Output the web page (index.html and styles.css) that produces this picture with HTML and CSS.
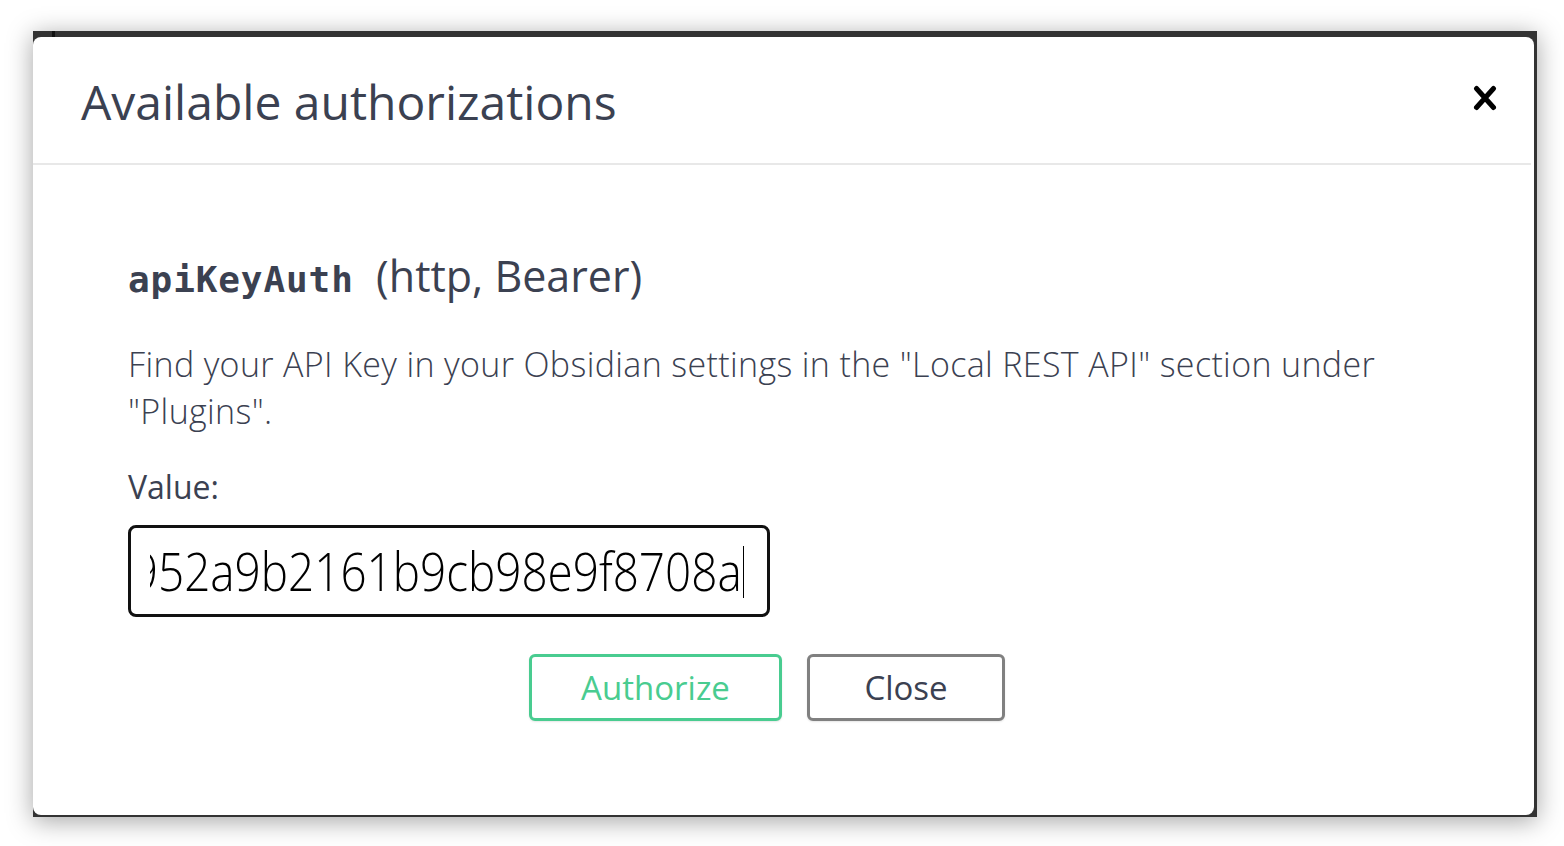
FILE: index.html
```html
<!DOCTYPE html>
<html lang="en">
<head>
<meta charset="utf-8">
<title>Available authorizations</title>
<link rel="stylesheet" href="styles.css">
</head>
<body>
<div class="stage">
  <div class="frame">
    <div class="modal">
      <div class="modal-header">
        <h3 class="modal-title">Available authorizations</h3>
        <button class="close-modal" type="button" aria-label="Close">
          <svg width="24" height="26" viewBox="0 0 24 26"><path d="M3.5 3.5 L20.5 22.5 M20.5 3.5 L3.5 22.5" stroke="#000" stroke-width="5" stroke-linecap="round" fill="none"/></svg>
        </button>
      </div>
      <div class="modal-body">
        <h4 class="scheme"><code class="scheme-name">apiKeyAuth</code>&nbsp; (http, Bearer)</h4>
        <p class="desc">Find your API Key in your Obsidian settings in the "Local REST API" section under "Plugins".</p>
        <label class="field-label">Value:</label>
        <div class="input">
          <div class="input-clip">
            <span class="input-text">3f1c8e0a4d7b6e2951c0d4e952a9b2161b9cb98e9f8708a</span>
          </div>
          <span class="caret"></span>
        </div>
        <div class="btn-row">
          <button class="btn btn-authorize" type="button">Authorize</button>
          <button class="btn btn-close" type="button">Close</button>
        </div>
      </div>
    </div>
  </div>
</div>
</body>
</html>
```
FILE: styles.css
```css
html, body {
  margin: 0;
  padding: 0;
  background: #ffffff;
}
body {
  font-family: "Open Sans", "Noto Sans", sans-serif;
  color: #3b4151;
}
.stage {
  padding: 31px 27px 29px 33px;
}
.frame {
  position: relative;
  width: 1504px;
  height: 786px;
  box-sizing: border-box;
  background: #333333;
  padding: 6px 3px 2px 0;
  box-shadow: 0 4px 24px rgba(0, 0, 0, 0.36);
}
.frame::before {
  content: "";
  position: absolute;
  left: 19px;
  top: 0;
  width: 3px;
  height: 6px;
  background: #111;
}
.modal {
  height: 100%;
  background: #ffffff;
  border-radius: 8px;
  display: flex;
  flex-direction: column;
}
.modal-header {
  height: 128px;
  box-sizing: border-box;
  border-bottom: 2px solid #e8e8e8;
  margin-right: 3px;
  display: flex;
  align-items: center;
  justify-content: space-between;
  padding: 6px 34px 0 48px;
}
.modal-title {
  margin: 0 0 2px 0;
  font-size: 48px;
  font-weight: 400;
  line-height: 60px;
  color: #3b4151;
}
.close-modal {
  border: 0;
  background: none;
  padding: 0;
  margin: 0 0 11px 0;
  width: 24px;
  height: 26px;
  display: flex;
}
.modal-body {
  padding: 86px 128px 0 95px;
}
.scheme {
  margin: 0;
  font-size: 43px;
  font-weight: 400;
  line-height: 50px;
  color: #3b4151;
}
.scheme-name {
  font-family: "DejaVu Sans Mono", "Liberation Mono", monospace;
  font-weight: 700;
  font-size: 36px;
  letter-spacing: 0.9px;
  line-height: 40px;
}
.desc {
  margin: 40px 0 0 0;
  font-size: 34px;
  font-weight: 300;
  letter-spacing: 0.35px;
  line-height: 47px;
  color: #3b4151;
}
.field-label {
  display: block;
  margin-top: 32px;
  font-size: 32px;
  line-height: 40px;
  color: #3b4151;
}
.input {
  margin-top: 18px;
  width: 642px;
  height: 92px;
  box-sizing: border-box;
  border: 3px solid #111;
  border-radius: 8px;
  padding: 0 23px 0 19px;
  display: flex;
  align-items: center;
}
.input-clip {
  flex: 1;
  overflow: hidden;
  display: flex;
  justify-content: flex-end;
  align-items: center;
  height: 100%;
}
.input-text {
  flex: none;
  display: inline-block;
  white-space: nowrap;
  font-size: 53px;
  font-weight: 300;
  color: #000;
  transform: scaleX(0.865);
  transform-origin: right center;
  line-height: 60px;
}
.caret {
  flex: none;
  width: 1px;
  height: 52px;
  background: #000;
  margin-left: 1px;
  margin-top: 2px;
}
.btn-row {
  margin-top: 37px;
  display: flex;
  justify-content: center;
  gap: 25px;
}
.btn {
  height: 67px;
  box-sizing: border-box;
  background: #fff;
  border-radius: 6px;
  border: 3px solid #808080;
  font-family: "Open Sans", "Noto Sans", sans-serif;
  font-size: 33px;
  font-weight: 400;
  box-shadow: 0 1px 2px rgba(0, 0, 0, 0.1);
  display: flex;
  align-items: center;
  justify-content: center;
}
.btn-authorize {
  width: 253px;
  border-color: #49cc90;
  color: #49cc90;
}
.btn-close {
  width: 198px;
  color: #3b4151;
}
```
